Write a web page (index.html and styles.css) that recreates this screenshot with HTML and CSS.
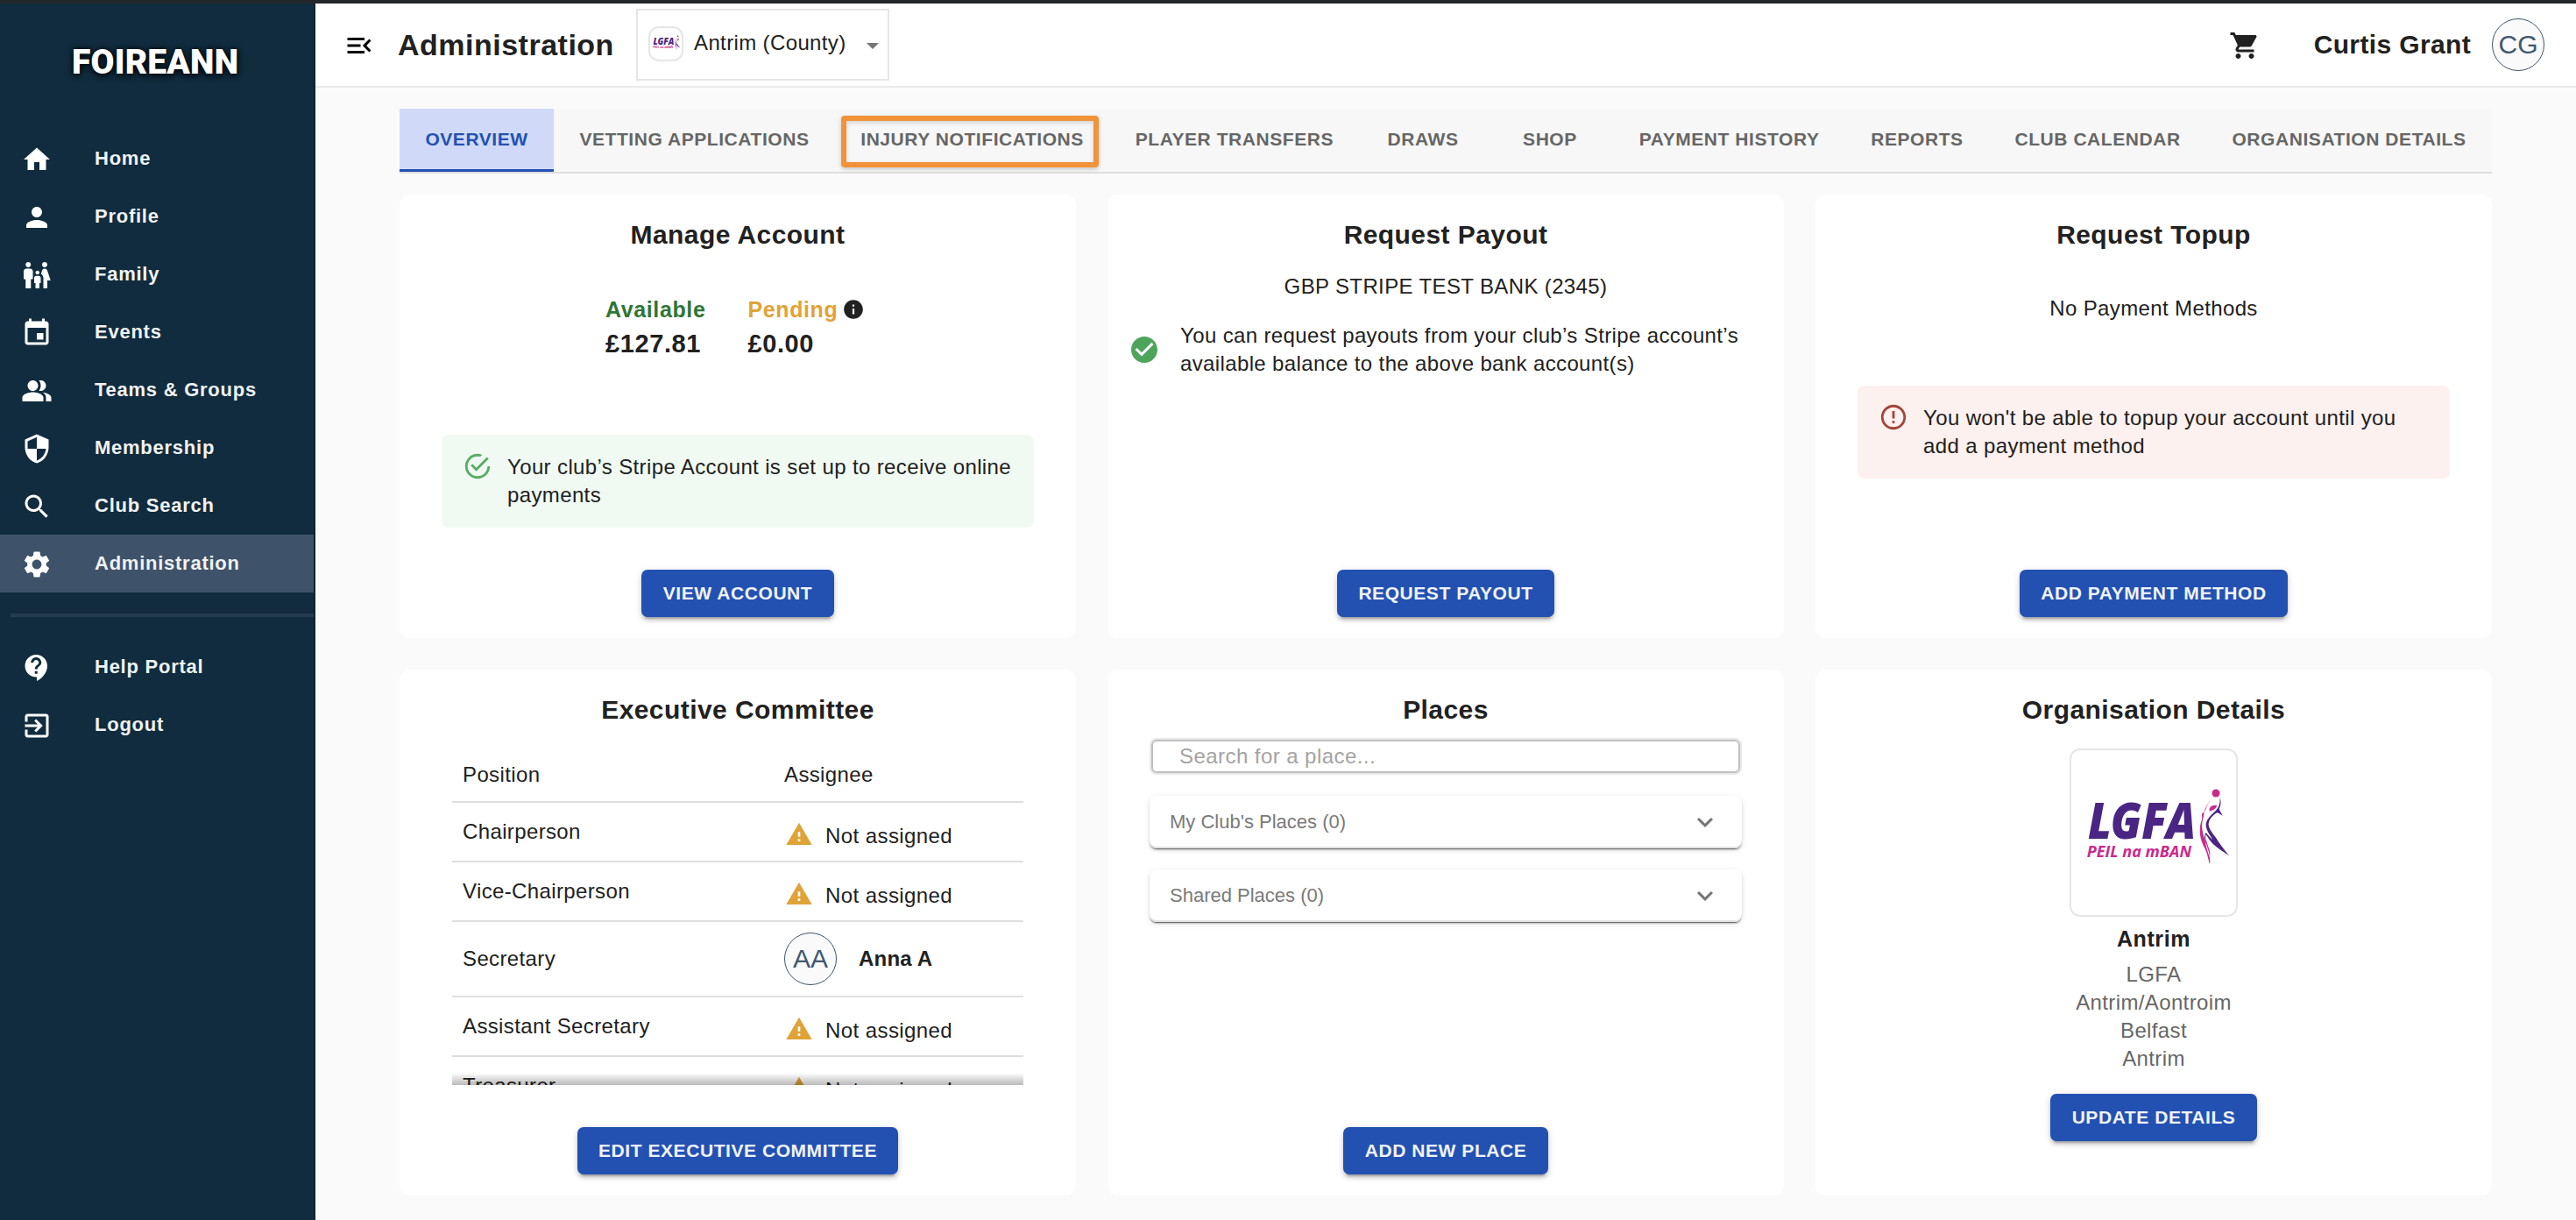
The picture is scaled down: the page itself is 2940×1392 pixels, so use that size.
FILE: index.html
```html
<!DOCTYPE html>
<html lang="en">
<head>
<meta charset="utf-8">
<title>Foireann – Administration</title>
<link rel="stylesheet" href="styles.css">
</head>
<body>
<svg class="defs" width="0" height="0" aria-hidden="true">
  <symbol id="lgfa" viewBox="13 18 564 564">
    <text class="lgfa-name" x="70" y="320" textLength="370" lengthAdjust="spacingAndGlyphs">LGFA</text>
    <text class="lgfa-sub" x="66" y="384" textLength="358" lengthAdjust="spacingAndGlyphs">PEIL na mBAN</text>
    <circle cx="508" cy="165" r="13.5" fill="#c92a8c"/>
    <path fill="#c92a8c" d="M494 184c-10 10-16 22-20 36-3 8-13 12-14 18 0 8 2 14-2 24-7 20-6 48 2 70 6 16 14 26 18 42l8 32 2-2c0-16-2-34-7-46l-9-28c-6-20-14-44-11-64 3-16 7-24 6-38 8-14 12-30 27-44zM486 218c4-10 14-13 26-11l-4 8c-8 8-16 10-22 12zM474 322c3 16 10 28 14 46l-1 18c-6-20-15-40-15-62z"/>
    <path fill="#4b2583" d="M522 179c4 12 4 26-3 40 2 6 8 14 12 24-8-6-12-10-19-11-14 8-27 22-29 38-1 14 12 30 24 46 14 22 28 42 48 64-18-12-38-24-56-40-12-12-18-24-26-34-1 10 0 16-2 22-3-10-2-20 2-28 5 4 14 16 24 24-8-14-24-34-23-52 2-20 20-34 34-48 12-12 15-26 14-45z"/>
  </symbol>
  <symbol id="i-warn" viewBox="0 0 24 24"><path d="M1 21h22L12 2 1 21zm12-3h-2v-2h2v2zm0-4h-2v-4h2v4z"/></symbol>
  <symbol id="i-more" viewBox="0 0 24 24"><path d="M16.590 8.590 12 13.170 7.410 8.590 6 10l6 6 6-6z"/></symbol>
</svg>

<div class="app">
  <aside class="sidebar">
    <div class="brand">FOIREANN</div>
    <nav class="nav">
      <a class="nav-item"><svg class="icon" viewBox="0 0 24 24"><path d="M10 20v-6h4v6h5v-8h3L12 3 2 12h3v8z"/></svg>Home</a>
      <a class="nav-item"><svg class="icon" viewBox="0 0 24 24"><path d="M12 12c2.210 0 4-1.790 4-4s-1.790-4-4-4-4 1.790-4 4 1.790 4 4 4zm0 2c-2.670 0-8 1.340-8 4v2h16v-2c0-2.660-5.330-4-8-4z"/></svg>Profile</a>
      <a class="nav-item"><svg class="icon" viewBox="0 0 24 24"><path d="M16 4c0-1.110.89-2 2-2s2 .89 2 2-.89 2-2 2-2-.89-2-2zm4 18v-6h2.500l-2.540-7.630C19.680 7.550 18.920 7 18.060 7h-.12c-.86 0-1.630.55-1.900 1.370l-.86 2.580c1.080.6 1.820 1.730 1.820 3.050v8h3zm-7.500-10.500c.83 0 1.500-.67 1.500-1.500s-.67-1.500-1.500-1.500S11 9.170 11 10s.67 1.500 1.500 1.500zM5.500 6c1.110 0 2-.89 2-2s-.89-2-2-2-2 .89-2 2 .89 2 2 2zm2 16v-7H9V9c0-1.100-.9-2-2-2H4c-1.100 0-2 .9-2 2v6h1.500v7h4zm6.500 0v-4h1v-4c0-.82-.68-1.500-1.500-1.500h-2c-.82 0-1.500.68-1.500 1.500v4h1v4h3z"/></svg>Family</a>
      <a class="nav-item"><svg class="icon" viewBox="0 0 24 24"><path d="M17 12h-5v5h5v-5zM16 1v2H8V1H6v2H5c-1.110 0-1.990.9-1.990 2L3 19c0 1.100.89 2 2 2h14c1.100 0 2-.9 2-2V5c0-1.100-.9-2-2-2h-1V1h-2zm3 18H5V8h14v11z"/></svg>Events</a>
      <a class="nav-item"><svg class="icon" viewBox="0 0 24 24"><path d="M16.670 13.130C18.040 14.060 19 15.320 19 17v3h4v-3c0-2.180-3.570-3.470-6.330-3.870zM15 12c2.210 0 4-1.790 4-4s-1.790-4-4-4c-.47 0-.91.1-1.330.24C14.500 5.270 15 6.580 15 8s-.5 2.730-1.330 3.760c.42.14.86.24 1.330.24zM9 12c2.210 0 4-1.790 4-4s-1.790-4-4-4-4 1.790-4 4 1.790 4 4 4zm0 1c-2.670 0-8 1.340-8 4v3h16v-3c0-2.660-5.330-4-8-4z"/></svg>Teams &amp; Groups</a>
      <a class="nav-item"><svg class="icon" viewBox="0 0 24 24"><path d="M12 1 3 5v6c0 5.550 3.840 10.740 9 12 5.160-1.260 9-6.450 9-12V5l-9-4zm0 10.990h7c-.53 4.120-3.280 7.790-7 8.940V12H5V6.300l7-3.110v8.800z"/></svg>Membership</a>
      <a class="nav-item"><svg class="icon" viewBox="0 0 24 24"><path d="M15.500 14h-.79l-.28-.27C15.410 12.590 16 11.110 16 9.500 16 5.910 13.090 3 9.500 3S3 5.910 3 9.500 5.910 16 9.500 16c1.610 0 3.090-.59 4.230-1.570l.27.28v.79l5 4.990L20.490 19l-4.990-5zm-6 0C7.010 14 5 11.990 5 9.500S7.010 5 9.500 5 14 7.010 14 9.500 11.990 14 9.500 14z"/></svg>Club Search</a>
      <a class="nav-item is-active"><svg class="icon" viewBox="0 0 24 24"><path d="M19.140 12.940c.04-.3.06-.61.06-.94 0-.32-.02-.64-.07-.94l2.030-1.580c.18-.14.23-.41.12-.61l-1.920-3.320c-.12-.22-.37-.29-.59-.22l-2.390.96c-.5-.38-1.030-.7-1.620-.94l-.36-2.540c-.04-.24-.24-.41-.48-.41h-3.840c-.24 0-.43.17-.47.41l-.36 2.540c-.59.24-1.130.57-1.620.94l-2.390-.96c-.22-.08-.47 0-.59.22L2.740 8.870c-.12.21-.08.47.12.61l2.030 1.580c-.05.3-.09.63-.09.94s.02.64.07.94l-2.030 1.580c-.18.14-.23.41-.12.61l1.920 3.320c.12.22.37.29.59.22l2.390-.96c.5.38 1.030.7 1.620.94l.36 2.540c.05.24.24.41.48.41h3.840c.24 0 .44-.17.47-.41l.36-2.540c.59-.24 1.130-.56 1.620-.94l2.390.96c.22.08.47 0 .59-.22l1.920-3.320c.12-.22.07-.47-.12-.61l-2.010-1.580zM12 15.600c-1.980 0-3.600-1.620-3.600-3.600s1.620-3.600 3.600-3.600 3.600 1.620 3.600 3.600-1.620 3.600-3.600 3.600z"/></svg>Administration</a>
      <hr class="nav-rule">
      <a class="nav-item"><svg class="icon" viewBox="0 0 24 24"><path d="M11.500 2C6.810 2 3 5.810 3 10.500S6.810 19 11.500 19h.5v3c4.860-2.340 8-7 8-11.500C20 5.810 16.190 2 11.500 2zm1 14.500h-2v-2h2v2zm0-3.500h-2c0-3.250 3-3 3-5 0-1.100-.9-2-2-2s-2 .9-2 2h-2c0-2.210 1.790-4 4-4s4 1.790 4 4c0 2.500-3 2.750-3 5z"/></svg>Help Portal</a>
      <a class="nav-item"><svg class="icon" viewBox="0 0 24 24"><path d="M10.090 15.590 11.500 17l5-5-5-5-1.410 1.410L12.670 11H3v2h9.670l-2.580 2.590zM19 3H5c-1.110 0-2 .9-2 2v4h2V5h14v14H5v-4H3v4c0 1.100.89 2 2 2h14c1.100 0 2-.9 2-2V5c0-1.100-.9-2-2-2z"/></svg>Logout</a>
    </nav>
  </aside>

  <div class="main">
    <header class="header">
      <svg class="icon menu" viewBox="0 0 24 24"><path d="M3 18h13v-2H3v2zM3 6v2h13V6H3zm0 7h10v-2H3v2zm18 2.590L17.420 12 21 8.410 19.590 7l-5 5 5 5L21 15.590z"/></svg>
      <h1 class="title">Administration</h1>
      <div class="org-select">
        <span class="org-thumb"><svg viewBox="0 0 36 36"><use href="#lgfa" width="36" height="36"/></svg></span>
        <span>Antrim (County)</span>
        <svg class="caret" viewBox="0 0 14 7"><path d="M0 0h14L7 7z"/></svg>
      </div>
      <svg class="icon cart" viewBox="0 0 24 24"><path d="M7 18c-1.100 0-1.990.9-1.990 2S5.900 22 7 22s2-.9 2-2-.9-2-2-2zM1 2v2h2l3.600 7.590-1.350 2.450c-.16.28-.25.61-.25.96 0 1.100.9 2 2 2h12v-2H7.420c-.14 0-.25-.11-.25-.25l.03-.12.9-1.630h7.450c.75 0 1.410-.41 1.750-1.030l3.580-6.490c.08-.14.12-.31.12-.48 0-.55-.45-1-1-1H5.210l-.94-2H1zm16 16c-1.100 0-1.990.9-1.990 2s.89 2 1.990 2 2-.9 2-2-.9-2-2-2z"/></svg>
      <span class="user">Curtis Grant</span>
      <span class="avatar">CG</span>
    </header>

    <main class="content">
      <div class="tabs">
        <a class="tab is-active">OVERVIEW</a>
        <a class="tab">VETTING APPLICATIONS</a>
        <a class="tab">INJURY NOTIFICATIONS<span class="highlight"></span></a>
        <a class="tab">PLAYER TRANSFERS</a>
        <a class="tab">DRAWS</a>
        <a class="tab">SHOP</a>
        <a class="tab">PAYMENT HISTORY</a>
        <a class="tab">REPORTS</a>
        <a class="tab">CLUB CALENDAR</a>
        <a class="tab">ORGANISATION DETAILS</a>
      </div>

      <div class="cards">
        <section class="card">
          <h2>Manage Account</h2>
          <div class="balances">
            <div>
              <div class="label available">Available</div>
              <div class="amount">£127.81</div>
            </div>
            <div>
              <div class="label pending">Pending <svg class="info" viewBox="0 0 24 24"><path d="M12 2C6.480 2 2 6.480 2 12s4.480 10 10 10 10-4.480 10-10S17.520 2 12 2zm1 15h-2v-6h2v6zm0-8h-2V7h2v2z"/></svg></div>
              <div class="amount">£0.00</div>
            </div>
          </div>
          <div class="alert success">
            <svg viewBox="0 0 24 24"><path d="M20 12a8 8 0 1 1-8-8c.76 0 1.500.11 2.200.31l1.570-1.570A9.822 9.822 0 0 0 12 2a10 10 0 1 0 10 10h-2M7.910 10.080 6.500 11.500 11 16 21 6l-1.410-1.420L11 13.170l-3.090-3.090z"/></svg>
            <p>Your club’s Stripe Account is set up to receive online payments</p>
          </div>
          <button class="btn">VIEW ACCOUNT</button>
        </section>

        <section class="card">
          <h2>Request Payout</h2>
          <p class="bank">GBP STRIPE TEST BANK (2345)</p>
          <div class="payout-note">
            <svg viewBox="0 0 24 24"><path d="M12 2C6.480 2 2 6.480 2 12s4.480 10 10 10 10-4.480 10-10S17.520 2 12 2zm-2 15-5-5 1.410-1.410L10 14.170l7.590-7.590L19 8l-9 9z"/></svg>
            <p>You can request payouts from your club’s Stripe account’s available balance to the above bank account(s)</p>
          </div>
          <button class="btn">REQUEST PAYOUT</button>
        </section>

        <section class="card">
          <h2>Request Topup</h2>
          <p class="no-methods">No Payment Methods</p>
          <div class="alert error">
            <svg viewBox="0 0 24 24"><path d="M11 15h2v2h-2zm0-8h2v6h-2zm.99-5C6.470 2 2 6.480 2 12s4.470 10 9.990 10C17.520 22 22 17.520 22 12S17.520 2 11.990 2zM12 20c-4.420 0-8-3.580-8-8s3.580-8 8-8 8 3.580 8 8-3.580 8-8 8z"/></svg>
            <p>You won't be able to topup your account until you add a payment method</p>
          </div>
          <button class="btn">ADD PAYMENT METHOD</button>
        </section>

        <section class="card">
          <h2>Executive Committee</h2>
          <div class="committee">
            <div class="row head"><span>Position</span><span>Assignee</span></div>
            <div class="row"><span>Chairperson</span><span class="unassigned"><svg><use href="#i-warn"/></svg><b>Not assigned</b></span></div>
            <div class="row"><span>Vice-Chairperson</span><span class="unassigned"><svg><use href="#i-warn"/></svg><b>Not assigned</b></span></div>
            <div class="row tall"><span>Secretary</span><span class="assigned"><span class="avatar">AA</span>Anna A</span></div>
            <div class="row"><span>Assistant Secretary</span><span class="unassigned"><svg><use href="#i-warn"/></svg><b>Not assigned</b></span></div>
            <div class="row"><span>Treasurer</span><span class="unassigned"><svg><use href="#i-warn"/></svg><b>Not assigned</b></span></div>
          </div>
          <button class="btn btn-edit">EDIT EXECUTIVE COMMITTEE</button>
        </section>

        <section class="card">
          <h2>Places</h2>
          <div class="search"><input type="text" placeholder="Search for a place..."></div>
          <div class="accordion">My Club's Places (0)<svg><use href="#i-more"/></svg></div>
          <div class="accordion">Shared Places (0)<svg><use href="#i-more"/></svg></div>
          <button class="btn">ADD NEW PLACE</button>
        </section>

        <section class="card">
          <h2>Organisation Details</h2>
          <div class="crest"><svg viewBox="0 0 188 188"><use href="#lgfa" width="188" height="188"/></svg></div>
          <h3>Antrim</h3>
          <ul class="org-lines">
            <li>LGFA</li>
            <li>Antrim/Aontroim</li>
            <li>Belfast</li>
            <li>Antrim</li>
          </ul>
          <button class="btn btn-update">UPDATE DETAILS</button>
        </section>
      </div>
    </main>
  </div>
</div>
</body>
</html>
```
FILE: styles.css
```css
* { box-sizing: border-box; }

body {
  margin: 0;
  background: #fafafa;
  color: #212121;
  font-family: "Liberation Sans", Arial, sans-serif;
  font-size: 24px;
  line-height: 32px;
  letter-spacing: 0.37px;
}

h1, h2, h3, p, ul { margin: 0; padding: 0; }
.defs { display: none; }
svg { display: block; flex: none; }

.app {
  display: flex;
  height: 1392px;
  border-top: 4px solid #232629;
  overflow: hidden;
}

/* Sidebar */
.sidebar {
  flex: none;
  width: 360px;
  background: #102c3e;
  border-right: 2px solid #0d2534;
}

.brand {
  height: 144px;
  padding-left: 82px;
  font: 900 39px/134px Roboto, sans-serif;
  letter-spacing: 0.2px;
  color: #fff;
  text-shadow: 0 2px 8px rgba(0, 0, 0, 0.9), 0 0 5px rgba(0, 0, 0, 0.8);
}

.nav-item {
  display: flex;
  align-items: center;
  gap: 48px;
  height: 66px;
  padding: 0 0 1px 24px;
  font-size: 22px;
  font-weight: 700;
  letter-spacing: 0.75px;
  color: #f0f2f4;
}

.nav-item.is-active { background: #3e5369; }
.nav-item .icon { margin-top: 3px; fill: #fff; }
.nav-rule { height: 4px; margin: 24px 0 24px 12px; border: 0; background: #243b50; }

.icon { width: 36px; height: 36px; }

/* Header */
.main { flex: 1; min-width: 0; }

.header {
  display: flex;
  align-items: center;
  height: 96px;
  padding: 0 36px 0 31px;
  background: #fff;
  border-bottom: 2px solid #eaeaea;
}

.menu { margin: 2px 26px 0 1px; fill: #000; }

.title {
  width: 272px;
  font-size: 34px;
  letter-spacing: 0.5px;
}

.org-select {
  display: flex;
  align-items: center;
  gap: 12px;
  width: 289px;
  height: 82px;
  padding: 0 10px 4px 12px;
  border: 2px solid #e6e6e6;
}

.org-thumb {
  width: 40px;
  height: 40px;
  margin-top: 2px;
  border: 2px solid #e6e6e6;
  border-radius: 12px;
}

.caret { width: 14px; height: 7px; margin: 7px 0 0 auto; fill: #757575; }
.cart { margin: 2px 61px 0 auto; fill: #212121; }
.user { margin-right: 24px; font-size: 30px; font-weight: 700; letter-spacing: 0.36px; }

.avatar {
  display: flex;
  align-items: center;
  justify-content: center;
  flex: none;
  width: 60px;
  height: 60px;
  border: 1px solid #3d566e;
  border-radius: 50%;
  background: #fafafa;
  color: #3f5870;
  font-size: 30px;
  font-weight: 400;
  letter-spacing: 0;
}

/* Tabs */
.content { padding: 24px 96px 0; }

.tabs {
  display: flex;
  height: 74px;
  background: #f7f7f7;
  border-bottom: 2px solid #dedede;
}

.tab {
  position: relative;
  flex: 1 0 auto;
  min-width: 145px;
  padding: 0 28px;
  font-size: 21px;
  font-weight: 700;
  line-height: 70px;
  letter-spacing: 0.56px;
  text-align: center;
  color: #666;
}

.tab.is-active {
  background: #d0daf8;
  color: #2351b2;
  box-shadow: inset 0 -3px #2351b2;
}

.highlight {
  position: absolute;
  inset: 8px 12px 5px 7px;
  border: 6px solid #f29339;
  border-radius: 4px;
  box-shadow: 0 2px 5px rgba(0, 0, 0, 0.2), inset 0 2px 5px rgba(0, 0, 0, 0.15);
}

/* Cards */
.cards {
  display: grid;
  grid-template-columns: repeat(3, 1fr);
  grid-template-rows: 506px 600px;
  gap: 36px;
  margin-top: 24px;
}

.card {
  display: flex;
  flex-direction: column;
  padding: 28px 0 24px;
  border-radius: 12px;
  background: #fff;
}

.card h2 {
  font-size: 30px;
  line-height: 35px;
  letter-spacing: 0.43px;
  text-align: center;
}

.btn {
  align-self: center;
  height: 54px;
  margin-top: auto;
  padding: 0 24.5px;
  border: 0;
  border-radius: 7px;
  background: #2351b2;
  color: #f0f3fa;
  font: 700 21px/54px "Liberation Sans", Arial, sans-serif;
  letter-spacing: 0.56px;
  box-shadow: 0 6px 2px -4px rgba(0, 0, 0, 0.2), 0 4px 4px rgba(0, 0, 0, 0.14), 0 2px 10px rgba(0, 0, 0, 0.12);
}

.balances {
  display: flex;
  gap: 48px;
  margin: 48px 0 0 235px;
}

.label {
  display: flex;
  align-items: center;
  gap: 5px;
  font-size: 25px;
  font-weight: 700;
  line-height: 40px;
  letter-spacing: 0.62px;
}

.available { color: #2f7536; }
.pending { color: #e0a338; }
.info { width: 26px; height: 26px; fill: #212121; }
.amount { font-size: 29px; font-weight: 700; line-height: 38px; letter-spacing: 0.6px; }

.alert {
  display: flex;
  gap: 17px;
  height: 106px;
  margin: 85px 48px 0;
  padding: 21px 20px 21px 24px;
  border-radius: 8px;
}

.alert svg { width: 34px; height: 34px; margin-top: -2px; }
.success { background: #f0faf3; }
.success svg { fill: #58ad62; }
.error { margin-top: 72px; background: #fdf1ef; }
.error svg { fill: #a3453a; }

.bank { margin-top: 26px; text-align: center; }
.no-methods { margin-top: 51px; text-align: center; }

.payout-note {
  display: flex;
  align-items: center;
  gap: 23px;
  margin: 24px 30px 0 24px;
}

.payout-note svg { width: 36px; height: 36px; fill: #4fa45b; }

/* Executive committee */
.committee {
  position: relative;
  height: 392px;
  margin: 21px 60px 0;
  overflow: hidden;
}

.committee::after {
  content: "";
  position: absolute;
  inset: auto 0 0;
  height: 14px;
  background: linear-gradient(rgba(0, 0, 0, 0), rgba(0, 0, 0, 0.27));
}

.row {
  display: grid;
  grid-template-columns: 367px 1fr;
  align-items: center;
  height: 68px;
  padding-left: 12px;
  border-bottom: 2px solid #dedede;
}

.row.head { padding-top: 5px; }
.row.tall { height: 86px; }
.unassigned { display: flex; align-items: center; gap: 14px; padding: 5px 0 0 1px; }
.unassigned svg { width: 32px; height: 32px; fill: #e0a338; }
.unassigned b { padding-top: 5px; font-weight: 400; letter-spacing: 0.42px; }
.assigned { display: flex; align-items: center; gap: 25px; font-weight: 700; letter-spacing: 0.2px; }
.btn-edit { margin-top: 48px; }

/* Places */
.search {
  height: 42px;
  margin: 15px 48px 0;
  border: 2px solid #e8e8e8;
  border-radius: 8px;
}

.search input {
  display: block;
  width: 100%;
  height: 38px;
  padding: 0 30px;
  border: 2px solid #c0c0c0;
  border-radius: 6px;
  background: #fff;
  font: 24px "Liberation Sans", Arial, sans-serif;
  letter-spacing: 0.44px;
}

.search input::placeholder { color: #a3a3a3; }

.accordion {
  display: flex;
  align-items: center;
  justify-content: space-between;
  height: 60px;
  margin: 24px 48px 0;
  padding: 0 24px 0 23px;
  border-radius: 8px;
  font-size: 22px;
  letter-spacing: 0;
  color: #7a7a7a;
  box-shadow: inset 0 -2px #e2e2e2, 0 2px 1px -1px rgba(0, 0, 0, 0.5), 0 2px 2px rgba(0, 0, 0, 0.14), 0 2px 6px rgba(0, 0, 0, 0.12);
}

.accordion svg { width: 36px; height: 36px; fill: #757575; }

/* Organisation */
.crest {
  align-self: center;
  width: 192px;
  height: 192px;
  margin-top: 27px;
  border: 2px solid #e6e6e6;
  border-radius: 12px;
}

.lgfa-name { font: italic 900 171px "Noto Sans", sans-serif; fill: #4b2583; letter-spacing: 0; }
.lgfa-sub { font: italic 700 55px "Open Sans", sans-serif; fill: #c92a8c; letter-spacing: 0; }

.card h3 {
  margin-top: 7px;
  font-size: 25px;
  line-height: 36px;
  letter-spacing: 0.6px;
  text-align: center;
}

.org-lines { margin-top: 7px; list-style: none; color: #666; text-align: center; }
.btn-update { margin-top: 24px; }
```
